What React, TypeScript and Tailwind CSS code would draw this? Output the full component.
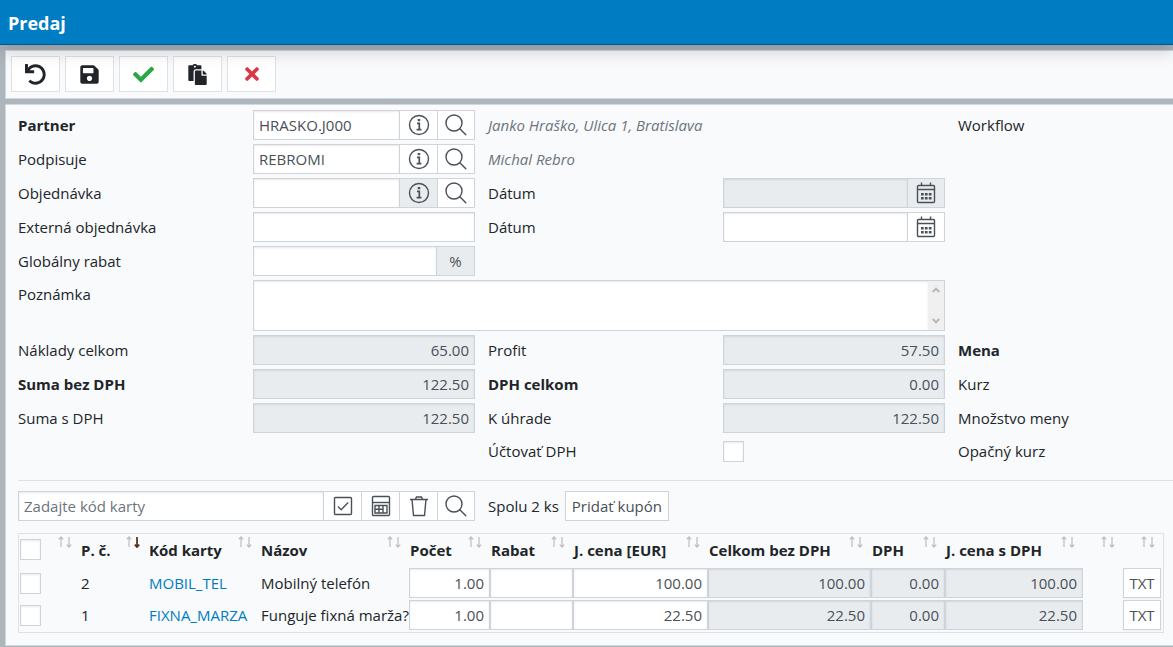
import React from "react";
import { FaUndo, FaSave, FaCheck, FaPaste, FaTimes } from "react-icons/fa";

const BOX = "border border-[#ced4da]";
const INSET = "shadow-[inset_0_1px_2px_rgba(0,0,0,0.09)]";

function InfoIcon() {
  return (
    <svg width="22" height="22" viewBox="0 0 22 22" fill="none" stroke="#495057" aria-hidden="true">
      <circle cx="11" cy="11" r="9.5" strokeWidth="1.4" />
      <rect x="9.700" y="5" width="2.500" height="2.200" fill="#495057" stroke="none" />
      <path d="M9 9.300h2.300v6.200M8.600 15.600h4.800" strokeWidth="1.7" />
    </svg>
  );
}

function SearchIcon() {
  return (
    <svg width="22" height="22" viewBox="0 0 22 22" fill="none" stroke="#495057" strokeWidth="1.4" strokeLinecap="round" aria-hidden="true">
      <circle cx="9" cy="9" r="8" />
      <path d="M14.8 14.8l6 6" />
    </svg>
  );
}

function CalendarIcon() {
  return (
    <svg width="20" height="22" viewBox="0 0 20 22" fill="none" stroke="#495057" strokeWidth="1.4" aria-hidden="true">
      <rect x="1.5" y="3.5" width="17" height="17" rx="1" />
      <path d="M1.500 7.500h17M5.500 0.500v3M14.500 0.500v3" />
      <path d="M5 12.200h10.500M5 16.200h10.500" strokeWidth="2.6" strokeDasharray="2.700 1.200" />
    </svg>
  );
}

function CheckBoxIcon() {
  return (
    <svg width="20" height="20" viewBox="0 0 20 20" fill="none" stroke="#495057" strokeWidth="1.4" aria-hidden="true">
      <rect x="1.5" y="1.5" width="17" height="17" rx="1" />
      <path d="M5 10.5l3.2 3.2L15.2 6.5" />
    </svg>
  );
}

function CalculatorIcon() {
  return (
    <svg width="20" height="22" viewBox="0 0 20 22" fill="none" stroke="#495057" strokeWidth="1.4" aria-hidden="true">
      <rect x="1.5" y="1.5" width="17" height="19" rx="1" />
      <path d="M1.500 7.500h17" />
      <path d="M4 10.500h12v7.500h-12zM4 14.200h8M8 10.500v7.500M12 10.500v7.500" />
    </svg>
  );
}

function TrashIcon() {
  return (
    <svg width="20" height="22" viewBox="0 0 20 22" fill="none" stroke="#495057" strokeWidth="1.4" aria-hidden="true">
      <path d="M1 4.500h18M6.500 4l1-2h5l1 2" />
      <path d="M3 4.500l1.500 16h11l1.500-16" />
    </svg>
  );
}

function SortArrows({ active = false }: { active?: boolean }) {
  return (
    <svg width="14" height="12" viewBox="0 0 14 12" fill="none" strokeWidth="1.2" className="absolute top-0.5 right-2" aria-hidden="true">
      <path d="M3 11V1M0.800 3.400L3 1l2.200 2.400" stroke="#bdbdbd" />
      <path d="M11 1v10M8.800 8.600L11 11l2.200-2.400" stroke={active ? "#5a2d1c" : "#bdbdbd"} strokeWidth={active ? 1.7 : 1.2} />
    </svg>
  );
}

function ToolButton({ label, children }: { label: string; children: React.ReactNode }) {
  return (
    <button type="button" aria-label={label} className="flex h-9 w-[49px] items-center justify-center border border-[#dee2e6] bg-white text-[#212529]">
      {children}
    </button>
  );
}

function IconButton({ label, disabled, children }: { label: string; disabled?: boolean; children: React.ReactNode }) {
  return (
    <button
      type="button"
      aria-label={label}
      disabled={disabled}
      className="-ml-px flex h-[30px] w-[39px] shrink-0 items-center justify-center border border-[#ced4da] bg-white last:w-[38px] disabled:bg-[#e9ecef]"
    >
      {children}
    </button>
  );
}

function Label({ id, bold, children }: { id?: string; bold?: boolean; children: React.ReactNode }) {
  return (
    <label htmlFor={id} className={bold ? "font-bold whitespace-nowrap" : "whitespace-nowrap"}>
      {children}
    </label>
  );
}

function TextField({ id, value = "", disabled, right }: { id: string; value?: string; disabled?: boolean; right?: boolean }) {
  return (
    <input
      id={id}
      type="text"
      defaultValue={value}
      disabled={disabled}
      className={`h-[30px] w-full min-w-0 flex-1 px-[5px] text-[#495057] ${BOX} ${INSET} ${disabled ? "bg-[#e9ecef]" : "bg-white"} ${right ? "text-right" : ""}`}
    />
  );
}

function Tick({ id, label }: { id?: string; label?: string }) {
  return <input id={id} type="checkbox" aria-label={label} className={`block size-[21px] appearance-none bg-white ${BOX} ${INSET}`} />;
}

function CellInput({ label, value, disabled }: { label: string; value: string; disabled?: boolean }) {
  return (
    <input
      type="text"
      aria-label={label}
      defaultValue={value}
      disabled={disabled}
      className={`block h-[30px] w-full px-[5px] text-right text-[#495057] ${BOX} ${INSET} ${disabled ? "bg-[#e9ecef]" : "bg-white"}`}
    />
  );
}

const columns = [
  { title: "", width: "w-[61px]" },
  { title: "P. č.", width: "w-[68px]", active: true },
  { title: "Kód karty", width: "w-[112px]" },
  { title: "Názov", width: "" },
  { title: "Počet", width: "w-[81px]" },
  { title: "Rabat", width: "w-[83px]" },
  { title: "J. cena [EUR]", width: "w-[135px]" },
  { title: "Celkom bez DPH", width: "w-[163px]" },
  { title: "DPH", width: "w-[74px]" },
  { title: "J. cena s DPH", width: "w-[138px]" },
  { title: "", width: "w-10" },
  { title: "", width: "w-10" },
];

const items = [
  { no: 2, code: "MOBIL_TEL", name: "Mobilný telefón", qty: "1.00", price: "100.00", total: "100.00", vat: "0.00", gross: "100.00" },
  { no: 1, code: "FIXNA_MARZA", name: "Funguje fixná marža?", qty: "1.00", price: "22.50", total: "22.50", vat: "0.00", gross: "22.50" },
];

export default function App() {
  return (
    <div className="min-h-screen overflow-x-hidden bg-[#adb5bd] pb-px font-['Open_Sans','Noto_Sans',sans-serif] text-[15px] leading-5 text-[#212529]">
      <header className="relative z-10 flex h-[45px] items-center border-b border-[#00598c] bg-[#007cc3] px-2 pt-0.5 shadow-[0_8px_16px_rgba(0,0,0,0.15)]">
        <h1 className="text-lg leading-6 font-bold text-white">Predaj</h1>
      </header>

      <div className="mt-[5px] ml-[5px] flex gap-[5px] border-y border-l border-[#d3d7db] bg-[#f8fafc] px-[5px] py-[5px] pb-[6px]">
        <ToolButton label="Späť"><FaUndo size={21} /></ToolButton>
        <ToolButton label="Uložiť"><FaSave size={21} /></ToolButton>
        <ToolButton label="Potvrdiť"><FaCheck size={21} color="#28a745" /></ToolButton>
        <ToolButton label="Kopírovať"><FaPaste size={21} /></ToolButton>
        <ToolButton label="Zrušiť"><FaTimes size={20} color="#dc3545" /></ToolButton>
      </div>

      <main className="mt-[5px] ml-[5px] border-y border-l border-[#d3d7db] bg-[#f8fafc] pt-[5px] pb-3 pl-3">
        <form className="grid grid-cols-[222fr_222fr_222fr_222fr_215fr] items-center gap-x-[13px] gap-y-1">
          <Label id="partner" bold>Partner</Label>
          <div className="flex">
            <TextField id="partner" value="HRASKO.J000" />
            <IconButton label="Info o partnerovi"><InfoIcon /></IconButton>
            <IconButton label="Hľadať partnera"><SearchIcon /></IconButton>
          </div>
          <em className="col-span-2 text-[#6c757d]">Janko Hraško, Ulica 1, Bratislava</em>
          <span>Workflow</span>

          <Label id="signer">Podpisuje</Label>
          <div className="flex">
            <TextField id="signer" value="REBROMI" />
            <IconButton label="Info o osobe"><InfoIcon /></IconButton>
            <IconButton label="Hľadať osobu"><SearchIcon /></IconButton>
          </div>
          <em className="col-span-3 text-[#6c757d]">Michal Rebro</em>

          <Label id="order">Objednávka</Label>
          <div className="flex">
            <TextField id="order" />
            <IconButton label="Info o objednávke" disabled><InfoIcon /></IconButton>
            <IconButton label="Hľadať objednávku"><SearchIcon /></IconButton>
          </div>
          <Label id="order-date">Dátum</Label>
          <div className="flex">
            <TextField id="order-date" disabled />
            <IconButton label="Kalendár objednávky" disabled><CalendarIcon /></IconButton>
          </div>
          <span />

          <Label id="ext-order">Externá objednávka</Label>
          <TextField id="ext-order" />
          <Label id="ext-date">Dátum</Label>
          <div className="flex">
            <TextField id="ext-date" />
            <IconButton label="Kalendár externej objednávky"><CalendarIcon /></IconButton>
          </div>
          <span />

          <Label id="discount">Globálny rabat</Label>
          <div className="flex">
            <TextField id="discount" />
            <span className="-ml-px flex h-[30px] w-[39px] shrink-0 items-center justify-center border border-[#ced4da] bg-[#e9ecef] text-[#495057]">%</span>
          </div>
          <span className="col-span-3" />

          <div className="self-start pt-1"><Label id="note">Poznámka</Label></div>
          <div className={`col-span-3 flex h-[51px] bg-white ${BOX}`}>
            <textarea id="note" className={`block h-full flex-1 resize-none overflow-hidden px-[5px] text-[#495057] ${INSET}`} />
            <div className="flex w-4 flex-col items-center justify-between bg-[#f0f0f0] py-1.5" aria-hidden="true">
              <svg width="8" height="6" viewBox="0 0 8 6" fill="none" stroke="#b8b8b8" strokeWidth="2"><path d="M0.700 5L4 1.700 7.300 5" /></svg>
              <svg width="8" height="6" viewBox="0 0 8 6" fill="none" stroke="#b8b8b8" strokeWidth="2"><path d="M0.700 1L4 4.300 7.300 1" /></svg>
            </div>
          </div>
          <span />

          <Label id="costs">Náklady celkom</Label>
          <TextField id="costs" value="65.00" disabled right />
          <Label id="profit">Profit</Label>
          <TextField id="profit" value="57.50" disabled right />
          <span className="font-bold">Mena</span>

          <Label id="net" bold>Suma bez DPH</Label>
          <TextField id="net" value="122.50" disabled right />
          <Label id="vat" bold>DPH celkom</Label>
          <TextField id="vat" value="0.00" disabled right />
          <span>Kurz</span>

          <Label id="gross">Suma s DPH</Label>
          <TextField id="gross" value="122.50" disabled right />
          <Label id="due">K úhrade</Label>
          <TextField id="due" value="122.50" disabled right />
          <span>Množstvo meny</span>

          <span className="col-span-2 h-7" />
          <Label id="charge-vat">Účtovať DPH</Label>
          <Tick id="charge-vat" />
          <span>Opačný kurz</span>
        </form>

        <hr className="mt-[15px] border-[#dee2e6]" />

        <div className="mt-[10px] grid grid-cols-[457fr_685fr] items-center gap-x-[13px]">
          <div className="flex">
            <input type="text" aria-label="Kód karty" placeholder="Zadajte kód karty" className={`h-[30px] min-w-0 flex-1 bg-white px-[5px] text-[#495057] placeholder:text-[#6c757d] ${BOX} ${INSET}`} />
            <IconButton label="Označiť"><CheckBoxIcon /></IconButton>
            <IconButton label="Kalkulačka"><CalculatorIcon /></IconButton>
            <IconButton label="Odstrániť"><TrashIcon /></IconButton>
            <IconButton label="Hľadať kartu"><SearchIcon /></IconButton>
          </div>
          <div className="flex items-center gap-1.5 whitespace-nowrap">
            <span>Spolu 2 ks</span>
            <button type="button" className={`h-[30px] bg-white px-[6px] text-[#495057] ${BOX}`}>Pridať kupón</button>
          </div>
        </div>

        <div className="mt-3 mr-[9px] border border-[#dee2e6] pb-px">
          <table className="w-full table-fixed border-collapse">
            <thead>
              <tr className="h-[33px]">
                {columns.map((c, i) => (
                  <th key={i} className={`relative pb-0.5 pl-px text-left align-middle font-bold whitespace-nowrap ${c.width}`}>
                    {i === 0 ? <Tick label="Označiť všetko" /> : c.title}
                    <SortArrows active={c.active} />
                  </th>
                ))}
              </tr>
            </thead>
            <tbody>
              {items.map((r) => (
                <tr key={r.no} className="h-8 whitespace-nowrap">
                  <td className="pl-px"><Tick label={`Označiť ${r.code}`} /></td>
                  <td className="pl-px">{r.no}</td>
                  <td className="pl-px"><a href="#" className="text-[#007cc3]">{r.code}</a></td>
                  <td className="pl-px">{r.name}</td>
                  <td><CellInput label="Počet" value={r.qty} /></td>
                  <td><CellInput label="Rabat" value="" /></td>
                  <td><CellInput label="J. cena" value={r.price} /></td>
                  <td><CellInput label="Celkom bez DPH" value={r.total} disabled /></td>
                  <td><CellInput label="DPH" value={r.vat} disabled /></td>
                  <td><CellInput label="J. cena s DPH" value={r.gross} disabled /></td>
                  <td />
                  <td><button type="button" className={`block h-[30px] w-[38px] bg-white text-center text-[#495057] shadow-xs ${BOX}`}>TXT</button></td>
                </tr>
              ))}
            </tbody>
          </table>
        </div>
      </main>
    </div>
  );
}
